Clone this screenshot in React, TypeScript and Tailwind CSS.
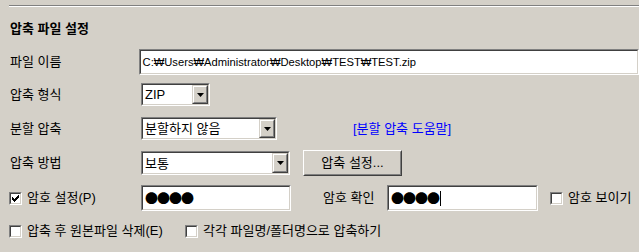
import React from 'react';

const font = "font-['Liberation_Sans','Noto_Sans_CJK_KR',sans-serif]";

const Sunken = ({ className = '', children }: { className?: string; children?: React.ReactNode }) => (
  <div className={`border border-t-[#808080] border-l-[#808080] border-b-white border-r-white ${className}`}>
    <div className="h-full flex items-center border border-t-[#404040] border-l-[#404040] border-b-[#d4d0c8] border-r-[#d4d0c8] bg-white">
      {children}
    </div>
  </div>
);

const ArrowButton = () => (
  <div className="h-full w-[16px] border border-t-[#d4d0c8] border-l-[#d4d0c8] border-b-[#404040] border-r-[#404040]">
    <div className="h-full flex items-center justify-center bg-[#d4d0c8] border border-t-white border-l-white border-b-[#808080] border-r-[#808080]">
      <svg width="7" height="4" viewBox="0 0 7 4">
        <path d="M0 0h7L3.5 4z" fill="#000" />
      </svg>
    </div>
  </div>
);

const Select = ({ value, className = '' }: { value: string; className?: string }) => (
  <Sunken className={`h-[23px] ${className}`}>
    <span className="flex-1 pl-[2px] leading-[15px] text-black">{value}</span>
    <ArrowButton />
  </Sunken>
);

const CheckBox = ({ checked = false }: { checked?: boolean }) => (
  <div className="w-[13px] h-[13px] border border-t-[#808080] border-l-[#808080] border-b-white border-r-white">
    <div className="h-full flex items-center justify-center bg-white border border-t-[#404040] border-l-[#404040] border-b-[#d4d0c8] border-r-[#d4d0c8]">
      {checked && (
        <svg width="7" height="7" viewBox="0 0 7 7">
          <path d="M0 2h1v1h1v1h1V3h1V2h1V1h1V0h1v3H6v1H5v1H4v1H3v1H2V6H1V5H0z" fill="#000" />
        </svg>
      )}
    </div>
  </div>
);

const Dots = () => (
  <span className="pl-[2px] font-['Noto_Sans_CJK_KR'] text-[13px] leading-[14px] tracking-[-1px] text-black">●●●●</span>
);

export default function App() {
  return (
    <div className={`w-[639px] h-[252px] overflow-hidden bg-[#d4d0c8] text-black text-[13px] leading-[16px] ${font}`}>
      <div className="pt-[5px]">
        <div className="ml-[9px] h-[2px] border-t border-t-[#808080] border-b border-b-white" />
      </div>

      <div className="mt-[14px] ml-[10px] h-[16px] leading-[16px] font-bold">압축 파일 설정</div>

      <div className="mt-[12px] flex items-center h-[26px] pl-[10px]">
        <div className="w-[131px]">파일 이름</div>
        <Sunken className="h-[26px] w-[510px]">
          <span className="pl-[2px] text-[11.2px] leading-[14px]">C:₩Users₩Administrator₩Desktop₩TEST₩TEST.zip</span>
        </Sunken>
      </div>

      <div className="mt-[8px] flex items-center h-[23px] pl-[10px]">
        <div className="w-[131px]">압축 형식</div>
        <Select value="ZIP" className="w-[69px]" />
      </div>

      <div className="mt-[11px] flex items-center h-[23px] pl-[10px]">
        <div className="w-[131px]">분할 압축</div>
        <Select value="분할하지 않음" className="w-[136px]" />
        <a className="ml-[76px] text-[#0000ff]">[분할 압축 도움말]</a>
      </div>

      <div className="mt-[11px] flex items-center h-[24px] pl-[10px]">
        <div className="w-[131px]">압축 방법</div>
        <Select value="보통" className="w-[149px] h-[24px]" />
        <div className="ml-[13px] w-[99px] h-[26px] border border-t-white border-l-white border-b-[#404040] border-r-[#404040]">
          <div className="h-full flex items-center justify-center border border-t-[#d4d0c8] border-l-[#d4d0c8] border-b-[#808080] border-r-[#808080]">
            압축 설정...
          </div>
        </div>
      </div>

      <div className="mt-[10px] flex items-center h-[26px] pl-[9px]">
        <CheckBox checked />
        <div className="ml-[5px] w-[114px]">암호 설정(P)</div>
        <Sunken className="h-[26px] w-[150px]">
          <Dots />
        </Sunken>
        <div className="ml-[32px] w-[64px]">암호 확인</div>
        <Sunken className="h-[26px] w-[151px]">
          <Dots />
          <span className="ml-[1px] w-px h-[15px] bg-black" />
        </Sunken>
        <div className="ml-[12px]">
          <CheckBox />
        </div>
        <div className="ml-[5px]">암호 보이기</div>
      </div>

      <div className="mt-[12px] flex items-center h-[16px] pl-[9px]">
        <CheckBox />
        <div className="ml-[5px] w-[158px]">압축 후 원본파일 삭제(E)</div>
        <CheckBox />
        <div className="ml-[5px]">각각 파일명/폴더명으로 압축하기</div>
      </div>
    </div>
  );
}
